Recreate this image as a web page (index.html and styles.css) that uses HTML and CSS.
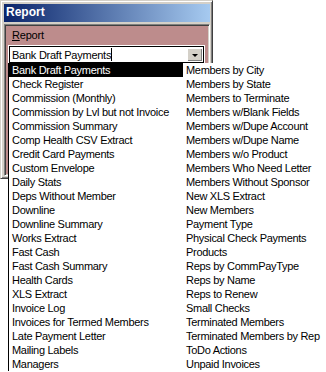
FILE: index.html
```html
<!DOCTYPE html>
<html lang="en">
<head>
  <meta charset="UTF-8">
  <title>Report</title>
  <link rel="stylesheet" href="styles.css">
</head>
<body>

  <div class="window">
    <div class="titlebar">Report</div>
    <div class="panel">
      <div class="label"><u>R</u>eport</div>
      <div class="combo">
        <span class="combo-text">Bank Draft Payments</span><span class="caret"></span>
        <span class="combo-btn"><span class="arrow"></span></span>
      </div>
    </div>
  </div>

  <!-- dropped-down list, over the window -->
  <div class="dropdown">
    <div class="item selected">Bank Draft Payments</div>
    <div class="item">Check Register</div>
    <div class="item">Commission (Monthly)</div>
    <div class="item">Commission by Lvl but not Invoice</div>
    <div class="item">Commission Summary</div>
    <div class="item">Comp Health CSV Extract</div>
    <div class="item">Credit Card Payments</div>
    <div class="item">Custom Envelope</div>
    <div class="item">Daily Stats</div>
    <div class="item">Deps Without Member</div>
    <div class="item">Downline</div>
    <div class="item">Downline Summary</div>
    <div class="item">Works Extract</div>
    <div class="item">Fast Cash</div>
    <div class="item">Fast Cash Summary</div>
    <div class="item">Health Cards</div>
    <div class="item">XLS Extract</div>
    <div class="item">Invoice Log</div>
    <div class="item">Invoices for Termed Members</div>
    <div class="item">Late Payment Letter</div>
    <div class="item">Mailing Labels</div>
    <div class="item">Managers</div>

    <div class="item">Members by City</div>
    <div class="item">Members by State</div>
    <div class="item">Members to Terminate</div>
    <div class="item">Members w/Blank Fields</div>
    <div class="item">Members w/Dupe Account</div>
    <div class="item">Members w/Dupe Name</div>
    <div class="item">Members w/o Product</div>
    <div class="item">Members Who Need Letter</div>
    <div class="item">Members Without Sponsor</div>
    <div class="item">New XLS Extract</div>
    <div class="item">New Members</div>
    <div class="item">Payment Type</div>
    <div class="item">Physical Check Payments</div>
    <div class="item">Products</div>
    <div class="item">Reps by CommPayType</div>
    <div class="item">Reps by Name</div>
    <div class="item">Reps to Renew</div>
    <div class="item">Small Checks</div>
    <div class="item">Terminated Members</div>
    <div class="item">Terminated Members by Rep</div>
    <div class="item">ToDo Actions</div>
    <div class="item">Unpaid Invoices</div>
  </div>

</body>
</html>
```

FILE: styles.css
```css
body {
  margin: 0;
  background: #fff;
  font-family: "Liberation Sans", Arial, sans-serif;
  font-size: 11px;
  color: #000;
  position: relative;
  width: 326px;
  height: 372px;
  overflow: hidden;
}

.window {
  width: 206px;
  height: 174px;
  background: #d4d0c8;
  border: 1px solid;
  border-color: #d4d0c8 #404040 #404040 #d4d0c8;
  box-shadow: inset 1px 1px 0 #fff, inset -1px -1px 0 #808080;
  padding: 3px 2px 0 3px;
}

.titlebar {
  height: 18px;
  line-height: 17px;
  padding-left: 2px;
  color: #fff;
  font-weight: bold;
  font-size: 12px;
  background: linear-gradient(to right, #0a246a, #a6caf0);
}

.panel {
  margin-top: 2px;
  height: 148px;
  background: #bd8c8c;
  border: 1px solid;
  border-color: #808080 #fff #fff #808080;
  box-shadow: inset 1px 1px 0 #404040, inset -1px -1px 0 #d4d0c8;
  padding: 2px 5px 0 4px;
}

.label {
  height: 14px;
  line-height: 14px;
  padding-left: 3px;
  margin-top: 1px;
  letter-spacing: -0.2px;
}

.combo {
  margin-top: 4px;
  height: 15px;
  background: #fff;
  border: 1px solid #000;
  outline: 1px solid #fff;
  display: flex;
  align-items: center;
  padding-left: 2px;
}

.combo-text {
  line-height: 14px;
  letter-spacing: -0.25px;
}

.caret {
  width: 1px;
  height: 13px;
  background: #000;
}

.combo-btn {
  margin-left: auto;
  margin-right: 1px;
  width: 15px;
  height: 13px;
  background: #d4d0c8;
  border-left: 1px solid #fff;
  border-top: 1px solid #fff;
  box-sizing: border-box;
  box-shadow: inset -1px -1px 0 #808080;
  display: flex;
  align-items: center;
  justify-content: center;
}

.arrow {
  width: 0;
  height: 0;
  border-left: 3px solid transparent;
  border-right: 3px solid transparent;
  border-top: 3px solid #000;
}

.dropdown {
  position: absolute;
  left: 8px;
  top: 63px;
  width: 330px;
  background: #fff;
  border-left: 1px solid #000;
  display: grid;
  grid-template-rows: repeat(22, 14px);
  grid-template-columns: 174px auto;
  grid-auto-flow: column;
  letter-spacing: -0.3px;
}

.item {
  line-height: 14px;
  padding-left: 3px;
  white-space: nowrap;
}

.item.selected {
  background: #000;
  color: #fff;
}
```
